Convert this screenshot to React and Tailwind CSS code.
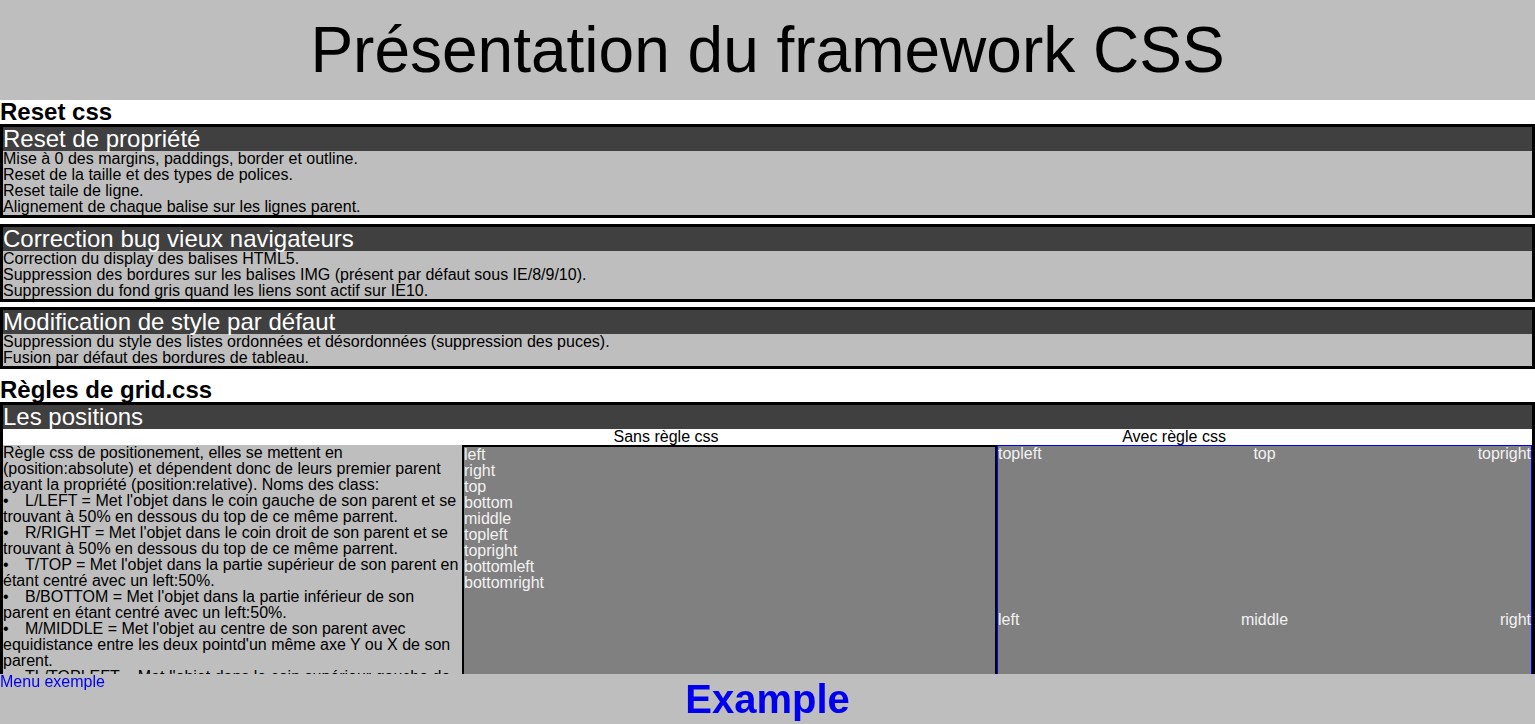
import React from "react";

const font = { fontFamily: '"Liberation Sans", Arial, sans-serif' };

const Section = ({ title, lines, className = "" }) => {
  return (
    <div className={"border-[3px] border-black bg-[#bebebe] " + className}>
      <div className="bg-[#404040] text-white text-[24px] leading-[24px]">{title}</div>
      {lines.map((line, index) => (
        <div key={index} className="text-[16px] leading-[16px] text-black">
          {line}
        </div>
      ))}
    </div>
  );
};

const items = [
  "L/LEFT = Met l'objet dans le coin gauche de son parent et se trouvant à 50% en dessous du top de ce même parrent.",
  "R/RIGHT = Met l'objet dans le coin droit de son parent et se trouvant à 50% en dessous du top de ce même parrent.",
  "T/TOP = Met l'objet dans la partie supérieur de son parent en étant centré avec un left:50%.",
  "B/BOTTOM = Met l'objet dans la partie inférieur de son parent en étant centré avec un left:50%.",
  "M/MIDDLE = Met l'objet au centre de son parent avec equidistance entre les deux pointd'un même axe Y ou X de son parent.",
  "TL/TOPLEFT = Met l'objet dans le coin supérieur gauche de son parent.",
  "TR/TOPRIGHT = Met l'objet dans le coin supérieur droit de son parent.",
  "BL/BOTTOMLEFT = Met l'objet dans le coin inférieur gauche de son parent.",
  "BR/BOTTOMRIGHT = Met l'objet dans le coin inférieur droit de son parent.",
];

const labels = ["left", "right", "top", "bottom", "middle", "topleft", "topright", "bottomleft", "bottomright"];

const App = () => {
  return (
    <div className="h-screen overflow-hidden bg-white text-black" style={font}>
      <header className="h-[100px] bg-[#bebebe] flex items-center justify-center">
        <h1 className="text-[64px] leading-[64px] font-normal">Présentation du framework CSS</h1>
      </header>

      <h2 className="text-[24px] leading-[24px] font-bold">Reset css</h2>
      <Section
        title="Reset de propriété"
        className="mb-[6px]"
        lines={[
          "Mise à 0 des margins, paddings, border et outline.",
          "Reset de la taille et des types de polices.",
          "Reset taile de ligne.",
          "Alignement de chaque balise sur les lignes parent.",
        ]}
      />
      <Section
        title="Correction bug vieux navigateurs"
        className="mb-[5px]"
        lines={[
          "Correction du display des balises HTML5.",
          "Suppression des bordures sur les balises IMG (présent par défaut sous IE/8/9/10).",
          "Suppression du fond gris quand les liens sont actif sur IE10.",
        ]}
      />
      <Section
        title="Modification de style par défaut"
        lines={[
          "Suppression du style des listes ordonnées et désordonnées (suppression des puces).",
          "Fusion par défaut des bordures de tableau.",
        ]}
      />

      <h2 className="mt-[9px] text-[24px] leading-[24px] font-bold">Règles de grid.css</h2>
      <div className="border-[3px] border-black">
        <div className="bg-[#404040] text-white text-[24px] leading-[24px]">Les positions</div>
        <div className="flex bg-white text-[16px] leading-[16px]">
          <div className="w-[459px]" />
          <div className="w-[408px] text-center">Sans règle css</div>
          <div className="w-[608px] text-center">Avec règle css</div>
        </div>
        <div className="flex">
          <div className="w-[459px] shrink-0 bg-[#bebebe] text-[16px] leading-[16px]">
            <p>
              Règle css de positionement, elles se mettent en (position:absolute) et dépendent donc de leurs premier
              parent ayant la propriété (position:relative). Noms des class:
            </p>
            <ul>
              {items.map((item, index) => (
                <li key={index}>
                  <span className="inline-block w-[22px]">•</span>
                  {item}
                </li>
              ))}
            </ul>
          </div>
          <div className="w-[535px] shrink-0 h-[336px] border-2 border-black bg-[#808080] text-[#f2f2f2] text-[16px] leading-[16px] self-start">
            {labels.map((label) => (
              <div key={label}>{label}</div>
            ))}
          </div>
          <div className="relative flex-1 h-[334px] border border-[#0000ff] bg-[#808080] text-[#f2f2f2] text-[16px] leading-[16px] self-start">
            <span className="absolute top-0 left-0">topleft</span>
            <span className="absolute top-0 left-1/2 -translate-x-1/2">top</span>
            <span className="absolute top-0 right-0">topright</span>
            <span className="absolute top-1/2 left-0">left</span>
            <span className="absolute top-1/2 left-1/2 -translate-x-1/2">middle</span>
            <span className="absolute top-1/2 right-0">right</span>
            <span className="absolute bottom-0 left-0">bottomleft</span>
            <span className="absolute bottom-0 left-1/2 -translate-x-1/2">bottom</span>
            <span className="absolute bottom-0 right-0">bottomright</span>
          </div>
        </div>
      </div>

      <footer className="fixed bottom-0 left-0 right-0 h-[50px] bg-[#bebebe] flex items-center justify-center">
        <a href="#" className="absolute top-0 left-0 text-[16px] leading-[16px] text-[#0000ee]">
          Menu exemple
        </a>
        <span className="text-[40px] leading-[40px] font-bold text-[#0000ee]">Example</span>
      </footer>
    </div>
  );
};

export default App;
